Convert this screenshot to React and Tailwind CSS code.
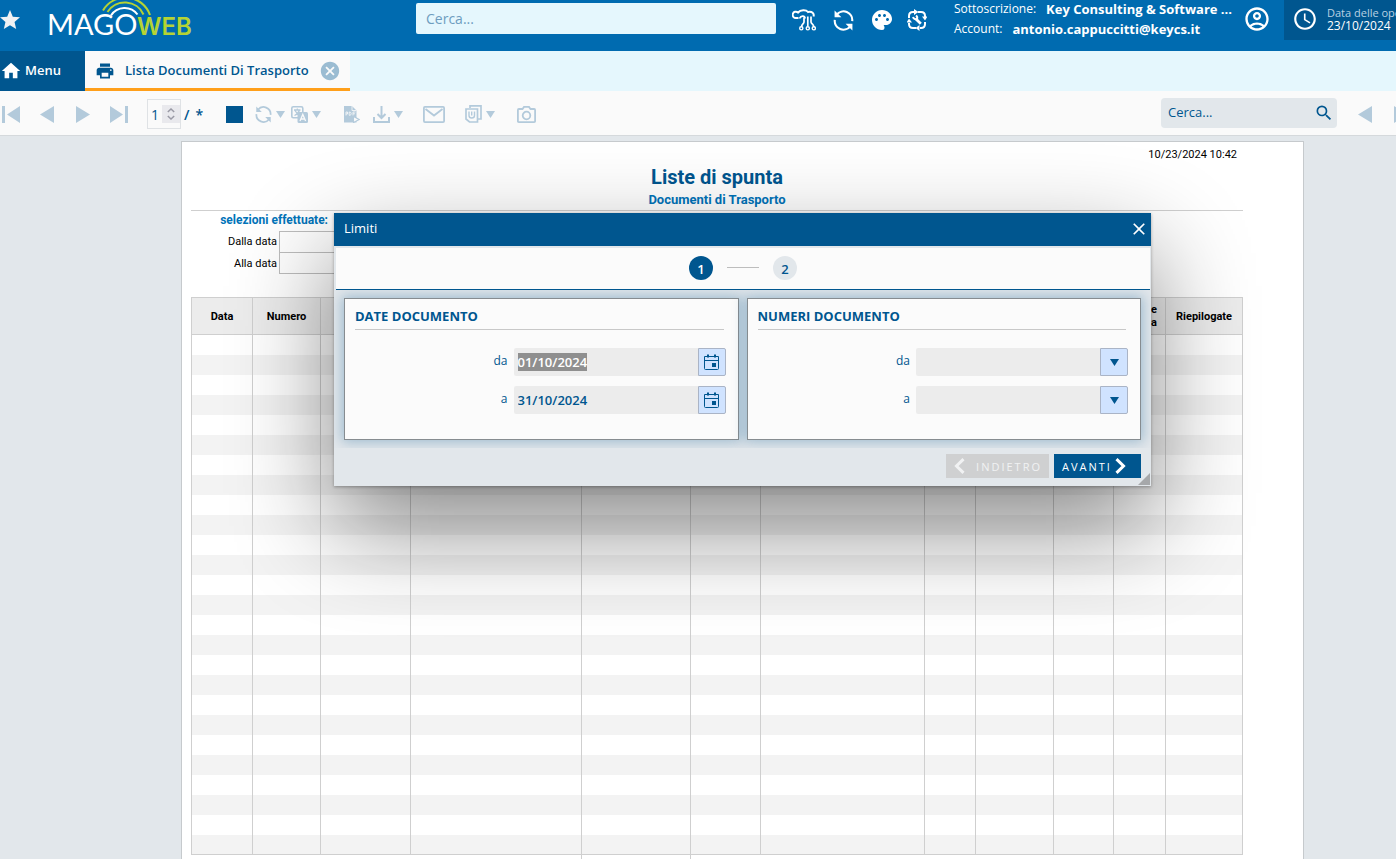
import React, { useEffect, useRef } from "react";
import {
  MdStar,
  MdPalette,
  MdOutlineAccountCircle,
  MdAccessTime,
  MdHome,
  MdPrint,
  MdCancel,
  MdSearch,
  MdClose,
} from "react-icons/md";

function Logo() {
  return (
    <svg width="150" height="42" viewBox="48 0 150 42" role="img" aria-label="MagoWeb" className="shrink-0">
      <text x="47" y="35" fill="#fff" fontSize="29" fontWeight="400" fontFamily="Lato, sans-serif">
        MAGO
      </text>
      <text x="137" y="35" fill="#b5d334" fontSize="24" fontWeight="600" fontFamily="Inter, sans-serif">
        WEB
      </text>
      <g fill="none" strokeWidth="2">
        <path d="M103 10.500 A26 26 0 0 1 150 15" stroke="#b5d334" />
        <path d="M107.500 12 A20.500 20.500 0 0 1 143.500 14.500" stroke="#b5d334" />
        <path d="M111 15.500 A16 16 0 0 1 137.500 14.500" stroke="#fff" />
      </g>
    </svg>
  );
}

function SyncIcon({ size = 20, width = 2.4 }) {
  return (
    <svg width={size} height={size} viewBox="0 0 20 20" fill="none" stroke="currentColor" strokeWidth={width}>
      <path d="M3.500 4.500 A8.300 8.300 0 0 1 18.300 10.500" />
      <path d="M16.500 15.500 A8.300 8.300 0 0 1 1.700 9.500" />
      <path d="M1.500 0.500 V7 H8 Z M18.500 19.500 V13 H12 Z" fill="currentColor" stroke="none" />
    </svg>
  );
}

function CloudIcon() {
  return (
    <svg width="24" height="22" viewBox="0 0 24 22" fill="none" stroke="currentColor" strokeWidth="2">
      <path d="M6.500 9 H4.500 A3.200 3.200 0 1 1 6 3.500 C8.500 0.800 14 0.500 16 3 C20 2 22.500 4.500 21.500 7.500" />
      <path d="M7.500 9.500 C9 6 13 6.500 13 9.500" strokeWidth="1.800" />
      <path d="M12 8.500 V13 C12 15 9.500 15 9.500 18 M15.800 7.500 V17.500 M19 7.500 V13 C19 15 21.800 15 21.800 18" strokeWidth="1.700" />
      <g strokeWidth="1.400">
        <circle cx="9.300" cy="19.300" r="1.600" />
        <circle cx="15.800" cy="19.300" r="1.600" />
        <circle cx="21.800" cy="19.300" r="1.600" />
      </g>
    </svg>
  );
}

function ToolsIcon() {
  return (
    <svg width="20" height="22" viewBox="0 0 20 22" fill="none" stroke="currentColor" strokeWidth="2">
      <path d="M2 9 V7 Q2 3 6 3 H7 M11 3 H14 Q18 3 18 7 V8 M18 13 V15 Q18 19 14 19 H13 M9 19 H6 Q2 19 2 15 V14" />
      <path d="M7 0 L11.500 3 L7 6 Z M15 7.500 H20.500 L18 11.500 Z M12.500 16 V22 L8.500 19 Z M-0.500 13.500 H5 L2 9.500 Z" fill="currentColor" stroke="none" />
      <path d="M8.500 9.500 L13.800 14.800" strokeWidth="2.800" />
      <path d="M6 8 A3 3 0 0 0 10 10 A3 3 0 0 0 9 6.500" strokeWidth="2" />
    </svg>
  );
}

function Caret() {
  return (
    <svg width="9" height="7" viewBox="0 0 9 7" fill="currentColor" className="shrink-0">
      <path d="M0 0 H9 L4.500 7 Z" />
    </svg>
  );
}

function TriLeft() {
  return (
    <svg width="14" height="17" viewBox="0 0 14 17" fill="currentColor">
      <path d="M14 0 V17 L0 8.500 Z" />
    </svg>
  );
}

function TriRight() {
  return (
    <svg width="14" height="17" viewBox="0 0 14 17" fill="currentColor">
      <path d="M0 0 V17 L14 8.500 Z" />
    </svg>
  );
}

function FirstIcon() {
  return (
    <svg width="18" height="17" viewBox="0 0 18 17" fill="currentColor">
      <path d="M0 0 H3 V17 H0 Z M18 0 V17 L5 8.500 Z" />
    </svg>
  );
}

function LastIcon() {
  return (
    <svg width="18" height="17" viewBox="0 0 18 17" fill="currentColor">
      <path d="M15 0 H18 V17 H15 Z M0 0 V17 L13 8.500 Z" />
    </svg>
  );
}

function TranslateIcon() {
  return (
    <svg width="17" height="17" viewBox="0 0 17 17" fill="none" stroke="currentColor">
      <rect x="0.800" y="0.800" width="11" height="11" rx="1.500" strokeWidth="1.600" />
      <path d="M3 4 H9.500 M6.300 2.500 V4 M8.500 4 Q7.500 7.500 3.500 9.500 M4 4.500 Q5.500 7.500 8 8.500" strokeWidth="1.300" />
      <rect x="6.500" y="6" width="10.500" height="11" rx="1.500" fill="currentColor" stroke="none" />
      <path d="M9 15 L11.800 8.500 L14.600 15 M10 13 H13.600" stroke="#fafafa" strokeWidth="1.300" />
    </svg>
  );
}

function PdfIcon() {
  return (
    <svg width="16" height="17" viewBox="0 0 16 17">
      <path d="M0 0 H8 L12.500 4.500 V16.500 H0 Z" fill="currentColor" />
      <path d="M8 0 V4.500 H12.500" fill="none" stroke="#fafafa" strokeWidth="0.800" />
      <path d="M2 9.500 V6 H3.500 V8 H2 M5.200 6 V9.300 H6 Q7.200 9 7.200 7.700 Q7.200 6 5.200 6 M9 9.500 V6 H11.500 M9 7.800 H11" fill="none" stroke="#fafafa" strokeWidth="0.800" />
      <path d="M9.500 10.500 V16.500 L15.200 13.500 Z" fill="#fafafa" stroke="currentColor" strokeWidth="1.100" />
    </svg>
  );
}

function DownloadIcon() {
  return (
    <svg width="17" height="17" viewBox="0 0 17 17" fill="none" stroke="currentColor" strokeWidth="2">
      <path d="M1 11 V16 H16 V11" />
      <path d="M8.500 0 V11.500 M4.500 8 L8.500 12 L12.500 8" />
    </svg>
  );
}

function MailIcon() {
  return (
    <svg width="22" height="17" viewBox="0 0 22 17" fill="none" stroke="currentColor" strokeWidth="1.800">
      <rect x="0.900" y="0.900" width="20.200" height="15.200" rx="1" />
      <path d="M2.500 3 L11 9.500 L19.500 3" />
    </svg>
  );
}

function AttachIcon() {
  return (
    <svg width="17" height="18" viewBox="0 0 17 18" fill="none" stroke="currentColor" strokeWidth="1.700">
      <path d="M5 3 V0.900 H16 V14 H13" />
      <path d="M1 4 H12.500 V17 H4.500 L1 14 Z" />
      <path d="M4 6.500 V10.500 Q4 13 6.700 13 Q9.500 13 9.500 10.500 V6.500 M6.700 6.500 V10.500" strokeWidth="1.400" />
    </svg>
  );
}

function CameraIcon() {
  return (
    <svg width="19" height="17" viewBox="0 0 19 17" fill="none" stroke="currentColor" strokeWidth="1.800">
      <path d="M1.800 3 H5.500 L7 0.900 H12 L13.500 3 H17.200 Q18.100 3 18.100 4 V15.200 Q18.100 16.100 17.200 16.100 H1.800 Q0.900 16.100 0.900 15.200 V4 Q0.900 3 1.800 3 Z" />
      <circle cx="9.500" cy="9.500" r="3.800" />
    </svg>
  );
}

function CalendarIcon() {
  return (
    <svg width="15" height="16" viewBox="0 0 15 16" fill="none" stroke="currentColor">
      <path d="M0.500 2.500 H14.500 V14.500 Q14.500 15.500 13.500 15.500 H1.500 Q0.500 15.500 0.500 14.500 Z M0.500 6.500 H14.500" />
      <path d="M4 0.500 V3.500 M11 0.500 V3.500" strokeWidth="2" />
      <rect x="8" y="9" width="4" height="4" fill="currentColor" stroke="none" />
    </svg>
  );
}

function Header() {
  return (
    <header className="flex h-[51px] shrink-0 items-start bg-[#006bb0] text-white">
      <button type="button" aria-label="Preferiti" className="-ml-0.5 mt-2 shrink-0 text-[#f0f2f4]">
        <MdStar size={24} />
      </button>
      <div className="ml-[26px]">
        <Logo />
      </div>
      <input
        type="search"
        aria-label="Cerca"
        placeholder="Cerca..."
        className="ml-[218px] mt-[3px] h-[31px] w-[360px] shrink-0 rounded-xs bg-[#e5f7fd] px-2.5 text-[14px] text-[#00568f] outline-none placeholder:text-[#6e9dbf]"
      />
      <nav aria-label="Strumenti" className="ml-4 mt-2 flex h-6 shrink-0 items-center gap-[17px]">
        <button type="button" aria-label="Cloud"><CloudIcon /></button>
        <button type="button" aria-label="Aggiorna"><SyncIcon size={21} width={2} /></button>
        <button type="button" aria-label="Tema" className="-mx-px"><MdPalette size={24} /></button>
        <button type="button" aria-label="Manutenzione" className="-ml-[3px]"><ToolsIcon /></button>
      </nav>
      <dl className="-mt-px ml-[27px] w-[280px] shrink-0 leading-5 whitespace-nowrap">
        <div className="flex gap-2.5">
          <dt className="text-[12px]">Sottoscrizione:</dt>
          <dd className="text-[13px] font-bold">Key Consulting &amp; Software ...</dd>
        </div>
        <div className="flex gap-2.5">
          <dt className="text-[12px]">Account:</dt>
          <dd className="text-[13px] font-bold">antonio.cappuccitti@keycs.it</dd>
        </div>
      </dl>
      <button type="button" aria-label="Profilo" className="ml-[9px] mt-[5px] shrink-0">
        <MdOutlineAccountCircle size={28} />
      </button>
      <div className="ml-[13px] flex h-10 grow items-center gap-[9px] bg-[#00568f] pb-0.5 pl-2">
        <MdAccessTime size={26} className="shrink-0" />
        <div className="whitespace-nowrap">
          <div className="text-[11px] leading-[13px] text-[#b9d1e2]">Data delle operazioni</div>
          <div className="text-[12px] leading-[14px]">23/10/2024</div>
        </div>
      </div>
    </header>
  );
}

function TabBar() {
  return (
    <div className="flex h-10 shrink-0 bg-[#e5f7fd] text-[13px] font-semibold">
      <a href="#menu" className="flex w-[85px] items-center gap-[3px] bg-[#00568f] text-white">
        <MdHome size={22} />
        Menu
      </a>
      <div className="flex w-[265px] items-center border-b-3 border-[#ff9f1a] bg-[#fafafa] pt-0.5 pl-2.5 text-[#00568f]">
        <MdPrint size={20} className="shrink-0" />
        <a href="#lista" className="ml-2.5 whitespace-nowrap">Lista Documenti Di Trasporto</a>
        <button type="button" aria-label="Chiudi scheda" className="ml-2.5 text-[#9bbcd2]">
          <MdCancel size={22} />
        </button>
      </div>
    </div>
  );
}

function Tool({ label, className, children }) {
  return (
    <button type="button" aria-label={label} className={"flex shrink-0 items-center gap-1 " + className}>
      {children}
    </button>
  );
}

function Toolbar() {
  return (
    <div className="flex h-[45px] shrink-0 items-center border-b border-[#d5d9dc] bg-[#fafafa] pt-0.5 text-[#b3cadb]">
      <Tool label="Prima pagina" className="ml-0.5"><FirstIcon /></Tool>
      <Tool label="Pagina precedente" className="ml-5"><TriLeft /></Tool>
      <Tool label="Pagina successiva" className="ml-[22px]"><TriRight /></Tool>
      <Tool label="Ultima pagina" className="ml-5"><LastIcon /></Tool>
      <div className="ml-[19px] flex h-[30px] w-[34px] shrink-0 items-center border border-[#dfe2e5] text-[#00568f]">
        <input aria-label="Pagina" defaultValue="1" className="w-3.5 bg-transparent pl-[3px] text-[14px] font-medium outline-none" />
        <button type="button" aria-label="Cambia pagina" className="flex h-[18px] w-[18px] items-center justify-center bg-[#e9e9ed] text-[#9a9aa5]">
          <svg width="8" height="12" viewBox="0 0 8 12" fill="none" stroke="currentColor" strokeWidth="1.500">
            <path d="M0.800 4 L4 1 L7.200 4 M0.800 8 L4 11 L7.200 8" />
          </svg>
        </button>
      </div>
      <span className="ml-[3px] flex w-[42px] shrink-0 gap-1.5 text-[14px] font-semibold text-[#00568f]">
        <span>/</span>
        <span>*</span>
      </span>
      <Tool label="Interrompi" className="text-[#00568f]">
        <svg width="17" height="17" viewBox="0 0 17 17"><path d="M0 0 H17 V17 H0 Z" fill="currentColor" /></svg>
      </Tool>
      <Tool label="Aggiorna" className="ml-3"><SyncIcon size={17} width={2} /><Caret /></Tool>
      <Tool label="Lingua" className="ml-1.5"><TranslateIcon /><Caret /></Tool>
      <Tool label="Anteprima PDF" className="ml-[23px]"><PdfIcon /></Tool>
      <Tool label="Scarica" className="ml-[13px]"><DownloadIcon /><Caret /></Tool>
      <Tool label="Invia" className="ml-5"><MailIcon /></Tool>
      <Tool label="Allegati" className="ml-5"><AttachIcon /><Caret /></Tool>
      <Tool label="Cattura" className="ml-[22px]"><CameraIcon /></Tool>
      <label className="mb-0.5 ml-auto flex h-[30px] w-[176px] shrink-0 items-center rounded-sm bg-[#e2e7eb] px-[7px] text-[#00568f]">
        <input
          aria-label="Cerca nel documento"
          placeholder="Cerca..."
          className="w-full bg-transparent text-[13px] outline-none placeholder:text-[#00568f]"
        />
        <MdSearch size={20} className="-mr-1 shrink-0" />
      </label>
      <Tool label="Risultato precedente" className="ml-[21px]"><TriLeft /></Tool>
      <Tool label="Risultato successivo" className="mr-[77px] ml-[22px]"><TriRight /></Tool>
    </div>
  );
}

const columns = [
  { w: "w-[61px]", title: "Data" },
  { w: "w-[68px]", title: "Numero" },
  { w: "w-[90px]" },
  { w: "w-[171px]" },
  { w: "w-[109px]" },
  { w: "w-[70px]" },
  { w: "w-[164px]" },
  { w: "w-[51px]" },
  { w: "w-[78px]" },
  { w: "w-[60px]" },
  { w: "w-[52px]", title: "e a", narrow: true },
  { w: "w-[78px]", title: "Riepilogate" },
];
const rows = Array.from({ length: 26 }, (_, i) => i);

function Report() {
  return (
    <article className="mx-auto mt-[5px] w-[1123px] border border-[#c6cacd] bg-white pt-1.5 pr-[60px] pl-[9px] font-['Roboto',sans-serif] text-[11px] text-black">
      <p className="pr-1.5 text-right leading-[14px]">10/23/2024 10:42</p>
      <div className="border-b border-[#cfcfcf] pt-[3px] pb-0.5 text-center font-bold">
        <h1 className="text-[20px] leading-6 text-[#00568f]">Liste di spunta</h1>
        <h2 className="pt-0.5 text-[13px] leading-[17px] text-[#0073b9]">Documenti di Trasporto</h2>
      </div>
      <section className="h-[86px]">
        <h3 className="w-[137px] pb-0.5 text-right text-[12px] leading-[18px] font-bold whitespace-nowrap text-[#0073b9]">
          selezioni effettuate:
        </h3>
        <div className="flex h-[21px] items-center">
          <span className="w-[88px] pt-0.5 pr-0.5 text-right">Dalla data</span>
          <span className="h-[21px] w-[200px] border border-b-0 border-[#bdbdbd]" />
        </div>
        <div className="flex h-[22px] items-center">
          <span className="w-[88px] pt-0.5 pr-0.5 text-right">Alla data</span>
          <span className="h-[22px] w-[200px] border border-[#bdbdbd]" />
        </div>
      </section>
      <table className="w-[1052px] table-fixed border-separate border-spacing-0">
        <thead>
          <tr>
            {columns.map((c, i) => (
              <th
                key={i}
                scope="col"
                className={
                  "h-[38px] border-y border-l border-[#cfcfcf] bg-[#ececec] p-0 leading-[13px] font-bold last:border-r " +
                  c.w +
                  (c.narrow ? " pr-2 pl-9 text-right" : " text-center")
                }
              >
                {c.title}
              </th>
            ))}
          </tr>
        </thead>
        <tbody>
          {rows.map((r) => (
            <tr key={r} className="group even:bg-[#f3f3f3]">
              {columns.map((c, i) => (
                <td key={i} className="h-5 border-l border-[#cfcfcf] p-0 group-last:border-b last:border-r" />
              ))}
            </tr>
          ))}
        </tbody>
      </table>
      <div className="flex h-10 pl-[390px]">
        <div className="w-[110px] border-x border-[#cfcfcf]" />
      </div>
    </article>
  );
}

function Field({ id, label, value, inputRef, icon, action }) {
  return (
    <div className="flex h-7 items-center justify-end">
      <label htmlFor={id} className="pr-1.5 pb-0.5 text-[12px]">{label}</label>
      <input
        id={id}
        ref={inputRef}
        defaultValue={value}
        className="h-7 w-[184px] rounded-l-xs bg-[#ececec] px-1 text-[13px] leading-[18px] font-semibold outline-none selection:bg-[#8f8f8f] selection:text-white"
      />
      <button
        type="button"
        aria-label={action}
        className="flex h-7 w-7 items-center justify-center rounded-r-xs border border-[#aab4c6] bg-[#d0e3ff]"
      >
        {icon}
      </button>
    </div>
  );
}

function Panel({ title, children }) {
  return (
    <section className="flex h-[142px] flex-1 flex-col border border-[#868c90] bg-[#fbfbfb] pr-3 pl-2.5 shadow-[0_0_12px_2px_rgba(0,86,143,0.3)]">
      <h3 className="mr-0.5 border-b border-[#c8c8c8] pt-[7px] pb-[3px] text-[13px] leading-5 font-bold">{title}</h3>
      <div className="mt-[18px] flex flex-col gap-2.5">{children}</div>
    </section>
  );
}

function LimitsDialog() {
  const first = useRef(null);
  useEffect(() => {
    first.current.focus();
    first.current.select();
  }, []);
  const down = (
    <svg width="9" height="7" viewBox="0 0 9 7" fill="currentColor"><path d="M0 0 H9 L4.500 7 Z" /></svg>
  );
  return (
    <div
      role="dialog"
      aria-label="Limiti"
      className="relative w-[817px] bg-[#e2e7eb] text-[#00568f] shadow-[0_40px_100px_rgba(0,0,0,0.48),0_1px_3px_rgba(0,0,0,0.3)]"
    >
      <div className="flex h-[33px] items-center justify-between bg-[#00568f] pr-0.5 pb-px pl-2.5 text-[13px] text-white">
        <h2>Limiti</h2>
        <button type="button" aria-label="Chiudi"><MdClose size={20} /></button>
      </div>
      <ol className="mt-0.5 mr-px ml-0.5 flex h-[42px] items-center justify-center gap-3.5 border-b border-[#00568f] bg-[#fbfbfb] pb-0.5 text-[13px] font-semibold">
        <li className="flex h-6 w-6 items-center justify-center rounded-full bg-[#00568f] pt-1 text-white">1</li>
        <li aria-hidden="true" className="h-px w-8 bg-[#bdbdbd]" />
        <li className="flex h-6 w-6 items-center justify-center rounded-full bg-[#e2e7eb] pt-1">2</li>
      </ol>
      <div className="flex gap-2 overflow-hidden px-2.5 py-2">
        <Panel title="DATE DOCUMENTO">
          <Field id="data-da" label="da" value="01/10/2024" inputRef={first} icon={<CalendarIcon />} action="Scegli data iniziale" />
          <Field id="data-a" label="a" value="31/10/2024" icon={<CalendarIcon />} action="Scegli data finale" />
        </Panel>
        <Panel title="NUMERI DOCUMENTO">
          <Field id="numero-da" label="da" icon={down} action="Scegli numero iniziale" />
          <Field id="numero-a" label="a" icon={down} action="Scegli numero finale" />
        </Panel>
      </div>
      <div className="flex h-[38px] justify-end gap-[5px] pt-1.5 pr-2.5 text-[11px] tracking-[2px]">
        <button type="button" disabled className="flex h-6 w-[103px] items-center justify-between bg-[#cfd0d1] pr-[7px] pl-2 text-[#f1f2f3]">
          <svg width="11" height="16" viewBox="0 0 11 16" fill="none" stroke="currentColor" strokeWidth="3">
            <path d="M9.500 1.200 L2.500 8 L9.500 14.800" />
          </svg>
          <span className="pt-0.5">INDIETRO</span>
        </button>
        <button type="button" className="flex h-6 w-[87px] items-center gap-[3px] bg-[#00568f] pl-2 text-white">
          <span className="pt-0.5">AVANTI</span>
          <svg width="11" height="16" viewBox="0 0 11 16" fill="none" stroke="currentColor" strokeWidth="3">
            <path d="M1.500 1.200 L8.500 8 L1.500 14.800" />
          </svg>
        </button>
      </div>
      <svg width="12" height="12" viewBox="0 0 12 12" className="absolute right-px bottom-px">
        <path d="M12 0 V12 H0 Z" fill="#a6a8aa" />
      </svg>
    </div>
  );
}

export default function App() {
  return (
    <div className="h-screen overflow-hidden bg-[#e2e7eb] font-['Open_Sans',sans-serif]">
      <div className="flex h-full min-w-[1485px] flex-col">
        <Header />
        <TabBar />
        <Toolbar />
        <main className="relative min-h-0 flex-1 overflow-hidden">
          <Report />
          <div className="absolute inset-x-0 top-[77px] flex justify-center">
            <LimitsDialog />
          </div>
        </main>
      </div>
    </div>
  );
}
